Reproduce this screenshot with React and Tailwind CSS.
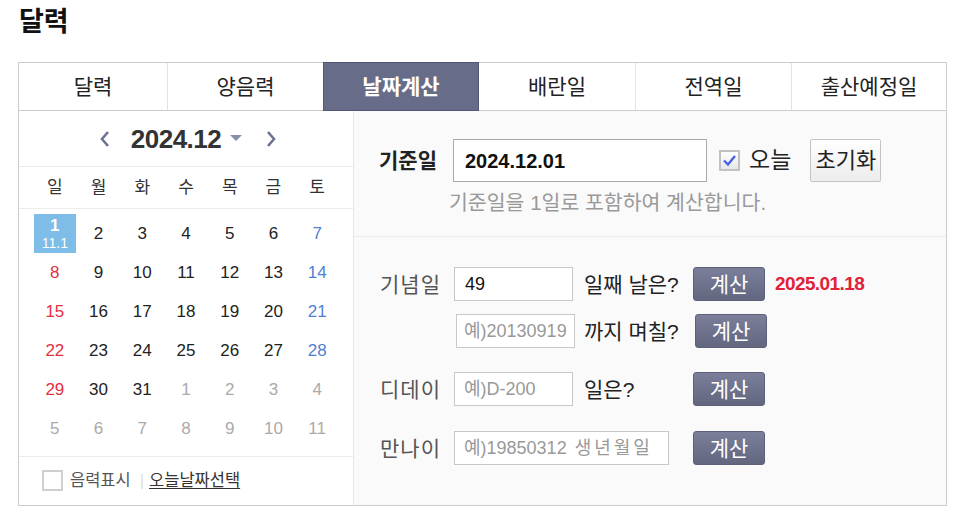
const tabs = ["달력", "양음력", "날짜계산", "배란일", "전역일", "출산예정일"];
const tabWidths = ["w-[148px]", "w-[156px]", "w-[156px]", "w-[156px]", "w-[156px]", "w-[155px]"];

const weekdays = ["일", "월", "화", "수", "목", "금", "토"];

const days = [
  ...Array.from({ length: 31 }, (_, i) => ({ d: i + 1, cur: true })),
  ...Array.from({ length: 11 }, (_, i) => ({ d: i + 1, cur: false })),
];

function dayColor(day, idx) {
  if (!day.cur) return "text-[#aaaaaa]";
  if (idx % 7 === 0) return "text-[#e2303f]";
  if (idx % 7 === 6) return "text-[#4f7fd4]";
  return "text-[#222222]";
}

function CalcButton() {
  return (
    <button className="h-[34px] w-[72px] rounded-[3px] border border-[#5c6079] bg-gradient-to-b from-[#7b7f9a] to-[#62667f] text-[21px] leading-none text-white">
      계산
    </button>
  );
}

function Chevron({ dir }) {
  return (
    <svg width="12" height="18" viewBox="0 0 12 18">
      <path
        d={dir === "left" ? "M9 2 L3 9 L9 16" : "M3 2 L9 9 L3 16"}
        fill="none"
        stroke="#6d7392"
        strokeWidth="2.6"
      />
    </svg>
  );
}

export default function App() {
  return (
    <div className="min-h-[516px] bg-white font-['Liberation_Sans','Noto_Sans_CJK_KR',sans-serif] text-[#222]">
      <h1 className="pl-[19px] pt-[5px] text-[27px] font-bold leading-[34px] text-[#111]">달력</h1>

      <div className="ml-[18px] mt-[23px] w-[929px] border border-[#cccccc]">
        {/* tabs */}
        <div className="flex h-[48px] border-b border-[#cccccc]">
          {tabs.map((t, i) => (
            <div
              key={t}
              className={
                (i === 2
                  ? "-mb-px -mt-px border border-[#505673] bg-[#676c89] font-bold text-white "
                  : "text-[#222] " + (i > 0 && i !== 3 ? "border-l border-[#e2e2e2] " : "")) +
                tabWidths[i] +
                " flex items-center justify-center text-[21px] leading-none"
              }
            >
              {t}
            </div>
          ))}
        </div>

        <div className="flex">
          {/* calendar */}
          <div className="w-[335px] border-r border-[#e6e6e6] bg-white">
            <div className="flex h-[56px] items-center justify-center border-b border-[#ececec] pl-[4px]">
              <Chevron dir="left" />
              <span className="ml-[20px] text-[26px] font-bold leading-none tracking-[-0.5px] text-[#333]">2024.12</span>
              <svg className="ml-[9px]" width="12" height="7" viewBox="0 0 12 7">
                <path d="M0 0 H12 L6 6 Z" fill="#8a8fa8" />
              </svg>
              <span className="ml-[23px]">
                <Chevron dir="right" />
              </span>
            </div>
            <div className="grid h-[42px] grid-cols-7 items-center border-b border-[#ececec] px-[14px] text-[17px] text-[#333]">
              {weekdays.map((w) => (
                <span key={w} className="text-center">
                  {w}
                </span>
              ))}
            </div>
            <div className="grid grid-cols-7 px-[14px] pb-[8px] pt-[5px]">
              {days.map((day, i) =>
                i === 0 ? (
                  <div key={i} className="flex h-[39px] justify-center">
                    <div className="flex h-[39px] w-[42px] flex-col items-center bg-[#7dbde8] text-white">
                      <span className="mt-[3px] text-[17px] font-bold leading-[18px]">1</span>
                      <span className="text-[14px] leading-[16px]">11.1</span>
                    </div>
                  </div>
                ) : (
                  <div key={i} className={"flex h-[39px] items-center justify-center text-[17px] " + dayColor(day, i)}>
                    {day.d}
                  </div>
                )
              )}
            </div>
            <div className="flex h-[48px] items-center border-t border-[#ececec] pl-[23px] text-[16.5px]">
              <span className="h-[21px] w-[21px] border-2 border-[#cfcfcf] bg-white" />
              <span className="ml-[7px] text-[#555]">음력표시</span>
              <span className="ml-[9px] text-[#dddddd]">|</span>
              <span className="ml-[5px] text-[#333] underline underline-offset-2">오늘날짜선택</span>
            </div>
          </div>

          {/* date calculation */}
          <div className="flex-1 bg-[#fafafa]">
            <div className="border-b border-[#ececec] pb-[21px] pl-[25px] pt-[28px]">
              <div className="flex items-center">
                <span className="w-[74px] text-[21px] font-bold leading-none text-[#222]">기준일</span>
                <div className="flex h-[43px] w-[254px] items-center border border-[#aaaaaa] bg-white pl-[11px] text-[20px] font-bold text-[#111]">
                  2024.12.01
                </div>
                <svg className="ml-[12px]" width="21" height="21" viewBox="0 0 21 21">
                  <defs>
                    <linearGradient id="cb" x1="0" y1="0" x2="0" y2="1">
                      <stop offset="0" stopColor="#ffffff" />
                      <stop offset="1" stopColor="#e6e6e6" />
                    </linearGradient>
                  </defs>
                  <rect x="1" y="1" width="19" height="19" fill="url(#cb)" stroke="#c2c2c2" strokeWidth="2" />
                  <path d="M5 10.5 L9 14.5 L16 6" fill="none" stroke="#4a63e6" strokeWidth="2.4" />
                </svg>
                <span className="ml-[9px] text-[23px] leading-none text-[#222]">오늘</span>
                <button className="ml-[19px] h-[43px] w-[71px] rounded-[2px] border border-[#c4c4c4] bg-gradient-to-b from-white to-[#ececec] text-[22px] text-[#222]">
                  초기화
                </button>
              </div>
              <p className="mt-[9px] pl-[70px] text-[20.5px] leading-[24px] text-[#999]">기준일을 1일로 포함하여 계산합니다.</p>
            </div>

            <div className="pb-[40px] pl-[26px] pt-[30px] text-[21px]">
              <div className="flex items-center">
                <span className="w-[74px] leading-none tracking-[1px] text-[#555]">기념일</span>
                <div className="flex h-[34px] w-[119px] items-center border border-[#c8c8c8] bg-white pl-[10px] text-[18px] text-[#111]">
                  49
                </div>
                <span className="ml-[11px] w-[109px] leading-none text-[#222]">일째 날은?</span>
                <CalcButton />
                <span className="ml-[10px] text-[19px] font-bold tracking-[-0.6px] text-[#e0213a]">2025.01.18</span>
              </div>
              <div className="mt-[13px] flex items-center pl-[76px]">
                <div className="flex h-[34px] w-[119px] items-center overflow-hidden whitespace-nowrap border border-[#c8c8c8] bg-white pl-[7px] text-[18px] text-[#999]">
                  예)20130919
                </div>
                <span className="ml-[9px] w-[111px] leading-none text-[#222]">까지 며칠?</span>
                <CalcButton />
              </div>
              <div className="mt-[24px] flex items-center">
                <span className="w-[74px] leading-none tracking-[1px] text-[#555]">디데이</span>
                <div className="flex h-[34px] w-[119px] items-center border border-[#c8c8c8] bg-white pl-[9px] text-[18px] text-[#999]">
                  예)D-200
                </div>
                <span className="ml-[11px] w-[109px] leading-none text-[#222]">일은?</span>
                <CalcButton />
              </div>
              <div className="mt-[25px] flex items-center">
                <span className="w-[74px] leading-none tracking-[1px] text-[#555]">만나이</span>
                <div className="flex h-[34px] w-[215px] items-center whitespace-nowrap border border-[#c8c8c8] bg-white pl-[9px] text-[18px] text-[#999]">
                  예)19850312 <span className="ml-[8px] tracking-[3px]">생년월일</span>
                </div>
                <span className="ml-[24px]">
                  <CalcButton />
                </span>
              </div>
            </div>
          </div>
        </div>
      </div>
    </div>
  );
}
